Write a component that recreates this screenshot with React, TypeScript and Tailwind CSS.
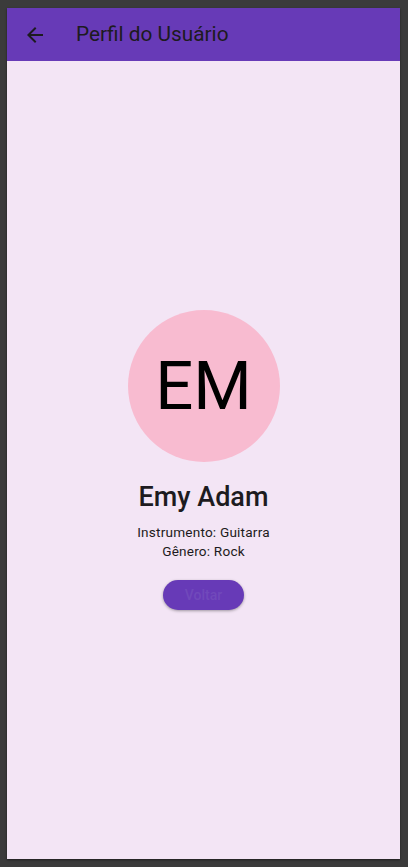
import React from "react";

export default function App() {
  return (
    <div className="w-[408px] h-[867px] bg-[#3b3b3b] pl-[7px] pt-[8px]" style={{ fontFamily: "Roboto, 'Noto Sans', sans-serif" }}>
      <div className="w-[393px] h-[851px] bg-[#f3e5f5] flex flex-col shadow-[0_1px_2px_rgba(0,0,0,0.5)]">
        <div className="h-[53px] bg-[#673ab7] flex items-center shrink-0">
          <div className="w-[54px] flex justify-center pl-[1px]">
            <svg width="24" height="24" viewBox="0 0 24 24" fill="#1d1b20">
              <path d="M20 11H7.83l5.59-5.59L12 4l-8 8 8 8 1.41-1.41L7.83 13H20v-2z" />
            </svg>
          </div>
          <span className="ml-[15px] text-[20.8px] text-[#1d1b20] leading-none">Perfil do Usuário</span>
        </div>
        <div className="flex-1 flex flex-col items-center justify-center">
          <div className="w-[152px] h-[152px] rounded-full bg-[#f8bbd0] flex items-center justify-center">
            <span className="text-[67px] text-black leading-none">EM</span>
          </div>
          <div className="mt-[19px] text-[27px] font-medium text-[#1d1b20] leading-[32px]">Emy Adam</div>
          <div className="mt-[10px] text-[13.6px] text-[#1d1b20] leading-[19px] text-center tracking-[0.2px]">
            <div>Instrumento: Guitarra</div>
            <div>Gênero: Rock</div>
          </div>
          <button className="mt-[19px] w-[81px] h-[30px] rounded-full bg-[#673ab7] text-[#7149bb] text-[14px] font-medium shadow-[0_1px_3px_rgba(0,0,0,0.35)]">
            Voltar
          </button>
        </div>
      </div>
    </div>
  );
}
